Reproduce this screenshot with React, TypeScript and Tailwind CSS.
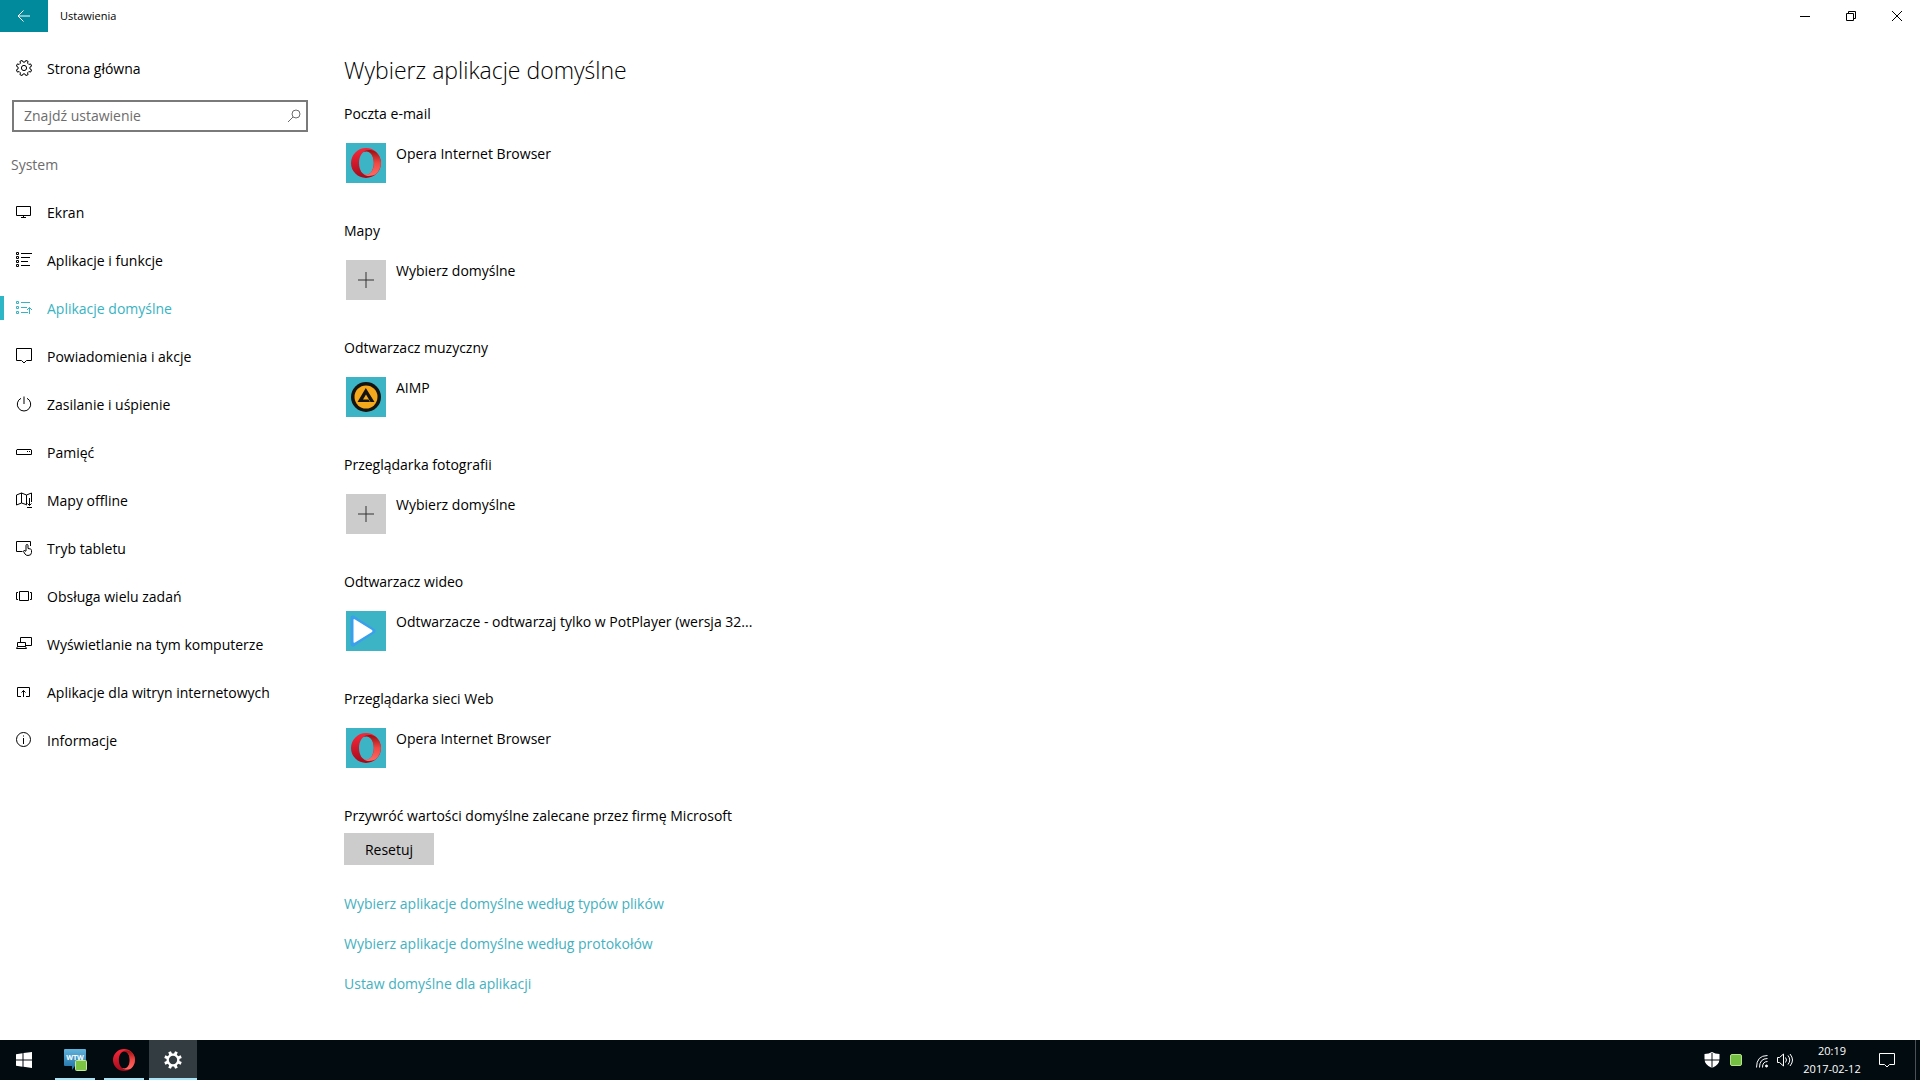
import type { ReactNode } from 'react';

type IconProps = {
    children: ReactNode;
    className?: string;
};

const Icon = ({ children, className = 'size-4' }: IconProps) => (
    <svg
        viewBox="0 0 16 16"
        fill="none"
        stroke="currentColor"
        strokeWidth="1"
        aria-hidden="true"
        className={`shrink-0 ${className}`}
    >
        {children}
    </svg>
);

const gearPath = (teeth: number, outer: number, inner: number) => {
    const step = (Math.PI * 2) / teeth;
    const points: string[] = [];
    for (let i = 0; i < teeth; i++) {
        const angle = i * step + step / 2;
        const corners = [
            [inner, -0.3],
            [outer, -0.2],
            [outer, 0.2],
            [inner, 0.3],
        ];
        corners.forEach(([radius, offset]) => {
            const a = angle + offset * step;
            points.push(`${(8 + radius * Math.cos(a)).toFixed(2)} ${(8 + radius * Math.sin(a)).toFixed(2)}`);
        });
    }
    return `M${points.join('L')}Z`;
};

const NAV_ITEMS: { label: string; icon: ReactNode; active?: boolean }[] = [
    {
        label: 'Ekran',
        icon: <path d="M.5 2.5h14v9H.5zM7.5 11.5v2M5 13.5h5" />,
    },
    {
        label: 'Aplikacje i funkcje',
        icon: (
            <path d="M.5.5h2v2h-2zM.5 4.5h2v2h-2zM.5 8.5h2v2h-2zM.5 12.5h2v2h-2zM5 1.5h11M5 5.5h9M5 9.5h7M5 13.5h9" />
        ),
    },
    {
        label: 'Aplikacje domyślne',
        active: true,
        icon: (
            <path d="M.5 1.5h2v2h-2zM.5 6.5h2v2h-2zM.5 11.5h2v2h-2zM5 2.5h9M5 7.5h6M5 12.5h7M13.5 14V7.5M11 10l2.5-2.5L16 10" />
        ),
    },
    {
        label: 'Powiadomienia i akcje',
        icon: <path d="M.5.5h15v12h-5L8 15l-2.5-2.5h-5z" />,
    },
    {
        label: 'Zasilanie i uśpienie',
        icon: <path d="M8 .5V8M5 2.3a6.7 6.7 0 1 0 6 0" />,
    },
    {
        label: 'Pamięć',
        icon: <path d="M1 5.5h14l.5.5v4.5H.5V6zM11 7.5h1M13 7.5h1" />,
    },
    {
        label: 'Mapy offline',
        icon: (
            <path d="M11 13l-1-.5-4.5-1.5-5 2V3l5-2 5 2 5-2v9M5.5 1v10M10.5 3v9.5M13.5 6v7.5M11.5 11.5l2 2 2-2M11 15.5h5" />
        ),
    },
    {
        label: 'Tryb tabletu',
        icon: (
            <path d="M6.5 11.5h-6v-10h14V6M10 11V5.500q0-1 1-1t1 1v3l2.500.5q1 .3 1 1.500v2q0 3-3.500 3-2 0-3-1.500L7.500 11.500q0-1.500 1.500-.8l1 .8" />
        ),
    },
    {
        label: 'Obsługa wielu zadań',
        icon: <path d="M3.5 3.5h9v9h-9zM2 4.5H.5v7H2M14 4.5h1.5v7H14" />,
    },
    {
        label: 'Wyświetlanie na tym komputerze',
        icon: <path d="M4.5 6V1.5h11v8H10M1.5 6.5h8v4h-8zM1.5 10.5l-1 2h10l-1-2" />,
    },
    {
        label: 'Aplikacje dla witryn internetowych',
        icon: <path d="M5 12.5H1.5v-9h12v9H10M7.5 13V6.5M5.5 8.5l2-2 2 2" />,
    },
    {
        label: 'Informacje',
        icon: (
            <>
                <circle cx="7.5" cy="7.5" r="7" />
                <path d="M7.5 6v6M7.5 3.5v1" />
            </>
        ),
    },
];

const OperaLogo = ({ className }: { className: string }) => (
    <svg viewBox="0 0 30 30" aria-hidden="true" className={className}>
        <defs>
            <linearGradient id="opera-outer" x1="0.3" y1="0" x2="0.4" y2="1">
                <stop offset="0" stopColor="#f7283a" />
                <stop offset="1" stopColor="#a30a1b" />
            </linearGradient>
            <linearGradient id="opera-inner" x1="0" y1="0" x2="0" y2="1">
                <stop offset="0" stopColor="#9b0d10" />
                <stop offset="0.5" stopColor="#ee4844" />
                <stop offset="1" stopColor="#ff6a64" />
            </linearGradient>
        </defs>
        <path
            fill="url(#opera-outer)"
            fillRule="evenodd"
            d="M15 0a15 15 0 1 0 0 30 15 15 0 1 0 0-30zM15.5 3c4 0 7.3 5 7.3 12s-3.3 12-7.3 12S8 22 8 15s3.5-12 7.5-12z"
        />
        <path
            fill="url(#opera-inner)"
            d="M12.5 4C15 1.5 20 1 25 3.9a15 15 0 0 1 0 22.2c-5 2.9-10 2.4-12.5-.1 6 2.5 10.3-3 10.3-11S18.5 1.5 12.5 4z"
        />
    </svg>
);

const AimpLogo = () => (
    <svg viewBox="0 0 30 30" aria-hidden="true" className="size-[30px]">
        <circle cx="15" cy="15" r="15" fill="#15130f" />
        <circle cx="15" cy="15" r="11.5" fill="#f5a81c" />
        <path
            fill="#15130f"
            d="M14.8 6L23.5 20h-4L15 12.5l-3 5h5.5l1.5 2.5H6.5z"
        />
    </svg>
);

const PotPlayerLogo = () => (
    <svg viewBox="0 0 40 40" aria-hidden="true" className="size-10">
        <path
            d="M7 7L27 20L7 33Z"
            fill="#fff"
            stroke="#3a9fec"
            strokeWidth="5"
            strokeLinejoin="round"
        />
        <path d="M7.5 9q0-1.500 1.500-.5l17 10.500q1 1 0 2L9 31.500q-1.500.8-1.500-.5z" fill="#fff" />
    </svg>
);

const PlusIcon = () => (
    <Icon className="size-4 text-[#333]">
        <path d="M8 0v16M0 8h16" />
    </Icon>
);

const DEFAULT_APPS: { category: string; app: string; logo?: ReactNode }[] = [
    {
        category: 'Poczta e-mail',
        app: 'Opera Internet Browser',
        logo: <OperaLogo className="size-[30px]" />,
    },
    { category: 'Mapy', app: 'Wybierz domyślne' },
    { category: 'Odtwarzacz muzyczny', app: 'AIMP', logo: <AimpLogo /> },
    { category: 'Przeglądarka fotografii', app: 'Wybierz domyślne' },
    {
        category: 'Odtwarzacz wideo',
        app: 'Odtwarzacze - odtwarzaj tylko w PotPlayer (wersja 32...',
        logo: <PotPlayerLogo />,
    },
    {
        category: 'Przeglądarka sieci Web',
        app: 'Opera Internet Browser',
        logo: <OperaLogo className="size-[30px]" />,
    },
];

const LINKS = [
    'Wybierz aplikacje domyślne według typów plików',
    'Wybierz aplikacje domyślne według protokołów',
    'Ustaw domyślne dla aplikacji',
];

const TitleBar = () => (
    <header className="flex h-8 items-center">
        <button aria-label="Wstecz" className="flex h-8 w-12 items-center justify-center bg-[#018a9c] text-white">
            <Icon>
                <path d="M2 8h12M7.5 2.5L2 8l5.5 5.5" />
            </Icon>
        </button>
        <span className="flex-1 pl-3 text-[11px]">Ustawienia</span>
        <button aria-label="Minimalizuj" className="flex h-8 w-[46px] items-center justify-center">
            <Icon>
                <path d="M3 8.5h10" />
            </Icon>
        </button>
        <button aria-label="Przywróć" className="flex h-8 w-[46px] items-center justify-center">
            <Icon>
                <path d="M3.5 5.5h7v7h-7zM5.5 5.5v-2h7v7h-2" />
            </Icon>
        </button>
        <button aria-label="Zamknij" className="flex h-8 w-[46px] items-center justify-center">
            <Icon>
                <path d="M3 3l10 10M13 3L3 13" />
            </Icon>
        </button>
    </header>
);

const Sidebar = () => (
    <aside className="w-80 shrink-0 pt-3">
        <a href="#home" className="flex h-12 items-center px-4">
            <Icon className="mr-[15px] size-4">
                <path d={gearPath(8, 7.8, 6)} />
                <circle cx="8" cy="8" r="2.6" />
            </Icon>
            <span className="pt-0.5">Strona główna</span>
        </a>
        <label className="mx-3 mt-2 flex h-8 items-center border-2 border-[#7a7a7a] pr-1 pl-2.5">
            <input
                type="search"
                aria-label="Znajdź ustawienie"
                placeholder="Znajdź ustawienie"
                className="min-w-0 flex-1 outline-none placeholder:text-[#6c6c6c]"
            />
            <Icon className="size-4 text-[#6c6c6c]">
                <circle cx="10" cy="6" r="4" />
                <path d="M7 9l-5 5" />
            </Icon>
        </label>
        <h2 className="mt-[23px] pl-[11px] text-[#6c6c6c]">System</h2>
        <nav className="mt-[13px]">
            {NAV_ITEMS.map((item) => (
                <a
                    key={item.label}
                    href="#system"
                    aria-current={item.active ? 'page' : undefined}
                    className={`flex h-12 items-center ${item.active ? 'text-[#37b3c3]' : ''}`}
                >
                    <span className={`h-6 w-1 ${item.active ? 'bg-[#2fb6c6]' : ''}`} />
                    <Icon className="mr-[15px] ml-3 size-4">{item.icon}</Icon>
                    <span className="pt-0.5">{item.label}</span>
                </a>
            ))}
        </nav>
    </aside>
);

const DefaultApps = () => (
    <main className="flex-1 pt-[22px] pl-6">
        <h1 className="text-[23px] leading-8 font-light">Wybierz aplikacje domyślne</h1>
        {DEFAULT_APPS.map((item) => (
            <section key={item.category} className="h-[117px] pt-[18px]">
                <h2>{item.category}</h2>
                <button className="mt-[19px] ml-0.5 flex items-start text-left">
                    <span
                        className={`flex size-10 items-center justify-center ${item.logo ? 'bg-[#3cb4c5]' : 'bg-[#ccc]'}`}
                    >
                        {item.logo ?? <PlusIcon />}
                    </span>
                    <span className="pt-px pl-2.5">{item.app}</span>
                </button>
            </section>
        ))}
        <h2 className="pt-[18px]">Przywróć wartości domyślne zalecane przez firmę Microsoft</h2>
        <button className="mt-[7px] h-8 w-[90px] bg-[#ccc] pt-px">Resetuj</button>
        <div className="mt-[29px] flex flex-col items-start gap-5 text-[#43b1c0]">
            {LINKS.map((link) => (
                <a key={link} href="#link">
                    {link}
                </a>
            ))}
        </div>
    </main>
);

const Taskbar = () => (
    <footer className="flex h-10 items-stretch bg-[#020b10] text-white">
        <button aria-label="Start" className="flex w-12 items-center justify-center">
            <Icon>
                <path
                    stroke="none"
                    fill="currentColor"
                    d="M0 2.2L6.5 1.3v6.2H0zM7.5 1.1L16 0v7.5H7.5zM0 8.5h6.5v6.2L0 13.8zM7.5 8.5H16V16l-8.5-1.2z"
                />
            </Icon>
        </button>
        <button
            aria-label="WTW"
            className="ml-[7px] flex w-10 items-center justify-center border-b-2 border-[#a8e4f6] pt-0.5"
        >
            <svg viewBox="0 0 24 24" aria-hidden="true" className="size-6">
                <defs>
                    <linearGradient id="wtw" x1="0" y1="0" x2="0" y2="1">
                        <stop offset="0" stopColor="#62b4dc" />
                        <stop offset="1" stopColor="#1d6ea5" />
                    </linearGradient>
                </defs>
                <path fill="url(#wtw)" d="M2 1h20q1 0 1 1v15q0 1-1 1H12l-3 4v-4H2q-1 0-1-1V2q0-1 1-1z" />
                <text x="12" y="12" fill="#fff" fontSize="7" fontWeight="700" textAnchor="middle">
                    WTW
                </text>
                <rect x="12.5" y="12.5" width="11" height="10" rx="1" fill="#7cc444" stroke="#c5e8a5" />
            </svg>
        </button>
        <button
            aria-label="Opera"
            className="ml-[9px] flex w-10 items-center justify-center border-b-2 border-[#a8e4f6] pt-0.5"
        >
            <OperaLogo className="size-[22px]" />
        </button>
        <button
            aria-label="Ustawienia"
            className="ml-[5px] flex w-12 items-center justify-center border-b-2 border-[#a8e4f6] bg-[#333c40] pt-0.5"
        >
            <Icon className="size-[18px]">
                <path
                    stroke="none"
                    fill="currentColor"
                    fillRule="evenodd"
                    d={`${gearPath(8, 8, 5.8)}M8 4.3a3.7 3.7 0 1 0 0 7.4 3.7 3.7 0 1 0 0-7.4z`}
                />
            </Icon>
        </button>
        <div className="ml-auto flex items-center">
            <Icon className="size-4">
                <path
                    stroke="none"
                    fill="currentColor"
                    d="M8 0q3 2 7.5 2v5Q15.5 13 8 16 .5 13 .5 7V2Q5 2 8 0z"
                />
                <path stroke="#020b10" d="M8 1v15M0 8h16" />
            </Icon>
            <span className="ml-[10px] size-3 rounded-xs border border-[#b5e08c] bg-[#74c043]" />
            <Icon className="ml-3 size-4">
                <path d="M2.5 15.5q0-12 11-12M5.5 15.5q0-9 8-9M8.5 15.5q0-6 5-6" />
                <circle cx="12.5" cy="14" r="1" fill="currentColor" />
            </Icon>
            <Icon className="ml-[7px] size-4">
                <path d="M.5 5.5h2l4-3.5v12l-4-3.5h-2zM8.5 5.5q2 2.500 0 5M11 3.500q3.500 4.500 0 9M13 2q5 6 0 12" />
            </Icon>
            <div className="w-[78px] text-center text-[11px] leading-[18px]">
                <div>20:19</div>
                <div>2017-02-12</div>
            </div>
            <button aria-label="Centrum akcji" className="ml-2 flex w-4">
                <Icon>
                    <path d="M.5 1.5h15v11h-5L8 15l-2.5-2.5h-5z" />
                </Icon>
            </button>
            <span className="mr-1 ml-5 h-10 w-px bg-[#4a5256]" />
        </div>
    </footer>
);

export default function App() {
    return (
        <div className="flex min-h-screen flex-col bg-white font-['Open_Sans','Noto_Sans',sans-serif] text-sm text-black">
            <TitleBar />
            <div className="flex flex-1">
                <Sidebar />
                <DefaultApps />
            </div>
            <Taskbar />
        </div>
    );
}
